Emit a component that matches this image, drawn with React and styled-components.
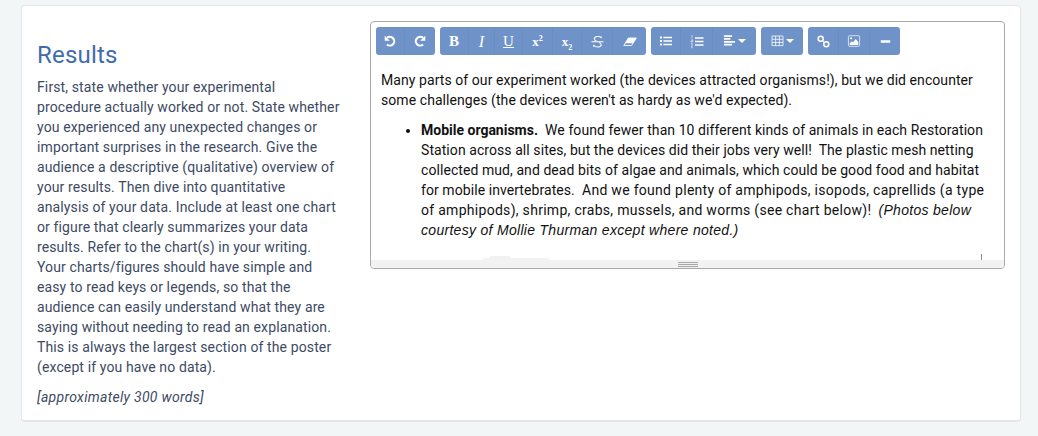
import React from "react";
import styled, { createGlobalStyle } from "styled-components";

const GlobalStyle = createGlobalStyle`
  html, body {
    margin: 0;
    padding: 0;
    background: #f3f6f7;
  }
`;

const Page = styled.div`
  width: 1038px;
  height: 436px;
  padding: 5px 17px 14px 21px;
  box-sizing: border-box;
  overflow: hidden;
`;

const Card = styled.section`
  height: 417px;
  box-sizing: border-box;
  display: flex;
  align-items: flex-start;
  gap: 29px;
  padding: 15px 15px 0 15px;
  background: #fff;
  border: 1px solid #e3e7e8;
  border-bottom: 2px solid #e3e7e8;
  border-radius: 4px;
`;

const Prompt = styled.div`
  flex: 0 0 304px;
  font-family: Roboto, "Liberation Sans", sans-serif;
  font-size: 14px;
  line-height: 20px;
  letter-spacing: 0.12px;
  color: #3d4a63;
`;

const Title = styled.h2`
  margin: 21px 0 9px;
  font-size: 24px;
  line-height: 26px;
  font-weight: 400;
  letter-spacing: 0.2px;
  color: #3f6cad;
`;

const Para = styled.p`
  margin: 0 0 10px;
  max-width: 303px;
  font-style: ${(p) => (p.$italic ? "italic" : "normal")};
  letter-spacing: ${(p) => (p.$italic ? "0.3px" : "inherit")};
`;

const Editor = styled.div`
  flex: 0 0 635px;
  height: 248px;
  box-sizing: border-box;
  display: flex;
  flex-direction: column;
  border: 1px solid #a9a9a9;
  border-radius: 4px;
  overflow: hidden;
`;

const Toolbar = styled.div`
  display: flex;
  gap: 5px;
  padding: 5px 5px 0;
  height: 33px;
  box-sizing: border-box;
  flex: none;
`;

const Group = styled.div`
  display: flex;
  height: 28px;
  border-radius: 3px;
  overflow: hidden;
  background: #6f93c8;
`;

const Btn = styled.div`
  width: ${(p) => p.$w}px;
  display: flex;
  align-items: center;
  justify-content: center;
  gap: 2px;
  color: #fff;
  box-sizing: border-box;
  border-right: 1px solid #6a8ec3;
  &:last-child {
    border-right: 0;
  }
`;

const Letter = styled.span`
  font-family: "Liberation Serif", serif;
  font-size: ${(p) => p.$size || 15}px;
  line-height: 15px;
  font-weight: ${(p) => (p.$bold ? 700 : 400)};
  font-style: ${(p) => (p.$italic ? "italic" : "normal")};
  text-decoration: ${(p) => p.$deco || "none"};
  sup, sub {
    font-size: 8px;
    line-height: 0;
  }
`;

const Body = styled.div`
  flex: 1;
  min-height: 0;
  overflow: hidden;
  padding: 15px 14px 0 10px;
  font-family: Roboto, "Liberation Sans", Arial, sans-serif;
  font-size: 14px;
  line-height: 20px;
  letter-spacing: 0.07px;
  color: #111;
  position: relative;
  b {
    letter-spacing: 0;
  }
`;

const Text = styled.p`
  margin: 0 0 10px;
`;

const List = styled.ul`
  margin: 0;
  padding-left: 40px;
`;

const Wide = styled.span`
  letter-spacing: 0.29px;
`;

const Note = styled.i`
  font-family: "Liberation Sans", Arial, sans-serif;
  letter-spacing: 0.3px;
`;

const Sliver = styled.div`
  position: absolute;
  bottom: 0;
  left: ${(p) => p.$left}px;
  width: ${(p) => p.$w}px;
  height: ${(p) => p.$h}px;
  background: ${(p) => p.$c};
  border-radius: ${(p) => p.$r || 0}px ${(p) => p.$r || 0}px 0 0;
`;

const Statusbar = styled.div`
  flex: none;
  height: 8px;
  background: #f2f2f2;
  display: flex;
  flex-direction: column;
  align-items: center;
  justify-content: center;
  gap: 1px;
  i {
    display: block;
    width: 20px;
    height: 1px;
    background: #a9a9a9;
  }
`;

const Caret = () => (
  <svg width="8" height="4" viewBox="0 0 8 4">
    <path d="M0 0h8L4 4z" fill="#fff" />
  </svg>
);

const Icon = ({ w = 14, h = 14, children }) => (
  <svg width={w} height={h} viewBox="0 0 14 14" fill="none" stroke="#fff">
    {children}
  </svg>
);

const Undo = () => (
  <Icon w={12} h={12}>
    <path d="M3.4 3.4A5.1 5.1 0 1 1 3.4 11" strokeWidth="2.5" />
    <path d="M0.8 0.8v6h6z" fill="#fff" stroke="none" />
  </Icon>
);

const Redo = () => (
  <Icon w={12} h={12}>
    <path d="M10.6 3.4A5.1 5.1 0 1 0 10.6 11" strokeWidth="2.5" />
    <path d="M13.2 0.8v6h-6z" fill="#fff" stroke="none" />
  </Icon>
);

const Strike = () => (
  <Icon w={13} h={13}>
    <path d="M11 3.4V1.6M11 3C9.8 1.2 3.6 1 3.6 4.2 3.6 5.2 4.6 6 5.8 6.5M8.8 8c1.4.6 2.2 1.3 2.2 2.4 0 3.2-6 3.2-8 .6M3 13V10.6" strokeWidth="1.1" />
    <path d="M0.5 7.2h13" strokeWidth="1.1" />
  </Icon>
);

const Eraser = () => (
  <Icon w={14} h={14}>
    <path d="M0.8 11.5L5.4 4h8L8.6 11.5z" strokeWidth="0.9" />
    <path d="M5.4 4h8L10 9.2H2.2z" fill="#fff" stroke="none" />
  </Icon>
);

const Bullets = () => (
  <Icon w={14} h={14}>
    <path d="M1 2.4h2v2H1zM1 6h2v2H1zM1 9.6h2v2H1z" fill="#fff" stroke="none" />
    <path d="M4.4 3.4H13M4.4 7H13M4.4 10.6H13" strokeWidth="1.5" />
  </Icon>
);

const Numbers = () => (
  <Icon w={14} h={15}>
    <path d="M2 0.5v3.4M1 5.4h1.8v1H1v1h1.8M1 9h1.8M1 10.4h1.8M1 11.8h1.8M1 13.2h1.8" strokeWidth="0.7" opacity="0.8" />
    <path d="M5 3.4H13.5M5 7H13.5M5 10.6H13.5" strokeWidth="1.5" />
  </Icon>
);

const Align = () => (
  <Icon w={13} h={12}>
    <path d="M0.5 1.3H10M0.5 4.6H8M0.5 7.9H13.5M0.5 11.2H10" strokeWidth="2" />
  </Icon>
);

const Table = () => (
  <Icon w={13} h={12}>
    <path d="M0.6 1.2h12.8v11.2H0.6zM0.6 5h12.8M0.6 8.7h12.8M4.8 1.2v11.2M9.2 1.2v11.2" strokeWidth="0.9" />
  </Icon>
);

const Chain = () => (
  <Icon w={13} h={13}>
    <circle cx="4" cy="4" r="2.7" strokeWidth="1.6" />
    <circle cx="10" cy="10" r="2.7" strokeWidth="1.6" />
    <path d="M6 6l2 2" strokeWidth="1.2" />
  </Icon>
);

const Picture = () => (
  <Icon w={14} h={12}>
    <rect x="0.5" y="0.8" width="13" height="12.4" rx="1.2" strokeWidth="1" opacity="0.8" />
    <path d="M2 11.8V9.6l2.6-2.4L6 8.4l3-3.6 3 3.4v3.6z" fill="#fff" stroke="none" />
    <circle cx="3.6" cy="3.9" r="1.2" fill="#fff" stroke="none" />
  </Icon>
);

const Rule = () => (
  <Icon w={11} h={11}>
    <path d="M1 7h12" strokeWidth="3" />
  </Icon>
);

export default function App() {
  return (
    <Page>
      <GlobalStyle />
      <Card>
        <Prompt>
          <Title>Results</Title>
          <Para>
            First, state whether your experimental procedure actually worked or
            not. State whether you experienced any unexpected changes or
            important surprises in the research. Give the audience a descriptive
            (qualitative) overview of your results. Then dive into quantitative
            analysis of your data. Include at least one chart or figure that
            clearly summarizes your data results. Refer to the chart(s) in your
            writing. Your charts/figures should have simple and easy to read
            keys or legends, so that the audience can easily understand what
            they are saying without needing to read an explanation. This is
            always the largest section of the poster (except if you have no
            data).
          </Para>
          <Para $italic>[approximately 300 words]</Para>
        </Prompt>
        <Editor>
          <Toolbar>
            <Group>
              <Btn $w={29}><Undo /></Btn>
              <Btn $w={30}><Redo /></Btn>
            </Group>
            <Group>
              <Btn $w={29}><Letter $bold>B</Letter></Btn>
              <Btn $w={26}><Letter $italic $size={16}>I</Letter></Btn>
              <Btn $w={28}><Letter $deco="underline">U</Letter></Btn>
              <Btn $w={30}><Letter $bold $size={13}>x<sup>2</sup></Letter></Btn>
              <Btn $w={29}><Letter $bold $size={13}>x<sub>2</sub></Letter></Btn>
              <Btn $w={31}><Strike /></Btn>
              <Btn $w={33}><Eraser /></Btn>
            </Group>
            <Group>
              <Btn $w={30}><Bullets /></Btn>
              <Btn $w={32}><Numbers /></Btn>
              <Btn $w={43}><Align /><Caret /></Btn>
            </Group>
            <Group>
              <Btn $w={42}><Table /><Caret /></Btn>
            </Group>
            <Group>
              <Btn $w={31}><Chain /></Btn>
              <Btn $w={31}><Picture /></Btn>
              <Btn $w={30}><Rule /></Btn>
            </Group>
          </Toolbar>
          <Body>
            <Text>
              Many parts of our experiment worked (the devices attracted
              organisms!), but we did encounter some challenges (the devices
              weren't as hardy as we'd expected).
            </Text>
            <List>
              <li>
                <b>Mobile organisms.</b>&nbsp; We found fewer than 10 different
                kinds of animals in each Restoration Station across all sites,
                but the devices did their jobs very well!&nbsp; The plastic mesh
                netting collected mud, and dead bits of algae and animals, which
                could be good food and habitat for mobile invertebrates.&nbsp;{" "}
                <Wide>
                  And we found plenty of amphipods, isopods, caprellids (a type
                  of amphipods), shrimp, crabs, mussels, and worms (see chart
                  below)!
                </Wide>
                &nbsp; <Note>(Photos below courtesy of Mollie Thurman except
                where noted.)</Note>
              </li>
            </List>
            <Sliver $left={112} $w={66} $h={2} $c="#f3f3f3" />
            <Sliver $left={118} $w={22} $h={4} $c="#f1f1f1" $r={3} />
            <Sliver $left={610} $w={1} $h={6} $c="#8a8a8a" />
          </Body>
          <Statusbar>
            <i />
            <i />
            <i />
          </Statusbar>
        </Editor>
      </Card>
    </Page>
  );
}
